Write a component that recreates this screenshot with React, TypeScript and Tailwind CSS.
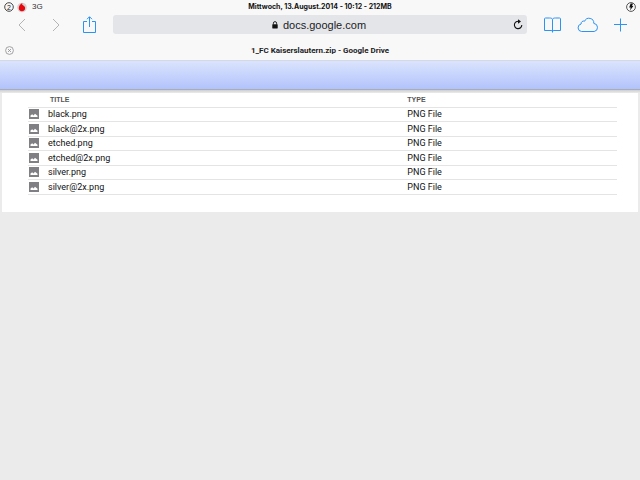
interface FileEntry {
  title: string;
  type: string;
}

const files: FileEntry[] = [
  { title: "black.png", type: "PNG File" },
  { title: "black@2x.png", type: "PNG File" },
  { title: "etched.png", type: "PNG File" },
  { title: "etched@2x.png", type: "PNG File" },
  { title: "silver.png", type: "PNG File" },
  { title: "silver@2x.png", type: "PNG File" },
];

const VodafoneIcon = () => (
  <svg width="10" height="11" viewBox="0 0 10 11">
    <circle cx="5" cy="5.5" r="4.8" fill="#d3d1d3" />
    <path d="M5.6 .9C3.5 1.8 1.8 3.8 1.8 6a3.1 3.1 0 0 0 6.3 0C8.1 4 6.2 3.6 5.1 2.5 5 1.9 5.2 1.3 5.6 .9Z" fill="#e8070c" />
  </svg>
);

const ImageIcon = () => (
  <svg width="10" height="10" viewBox="0 0 10 10" className="block">
    <rect width="10" height="10" fill="#808084" />
    <path d="M1.5 8V6.6L3.2 5.2 4.5 6.4 6 4.8 8.5 6.8V8Z" fill="#fff" />
  </svg>
);

const StatusBar = () => (
  <div className="grid h-[14px] grid-cols-[1fr_auto_1fr] items-center px-1 text-[8px] leading-[14px] text-[#111]">
    <div className="flex items-center">
      <svg width="10" height="10" viewBox="0 0 10 10">
        <circle cx="5" cy="5" r="4.3" fill="none" stroke="#333" strokeWidth=".9" />
        <text x="5" y="7.6" textAnchor="middle" fontSize="7" fill="#222">2</text>
      </svg>
      <span className="ml-[3px]">
        <VodafoneIcon />
      </span>
      <span className="ml-[5px] text-[#333]">3G</span>
    </div>
    <span className="font-['Inter',sans-serif] text-[7px] font-bold">Mittwoch, 13.August.2014 - 10:12 - 212MB</span>
    <svg width="10" height="10" viewBox="0 0 10 10" className="justify-self-end">
      <circle cx="5" cy="5" r="4.4" fill="none" stroke="#444" strokeWidth=".9" />
      <path d="M4.6 1.6H7L6.1 4H7.4L4 8.6 4.7 5.4H3.2Z" fill="#111" />
    </svg>
  </div>
);

const Toolbar = () => (
  <div className="flex h-[21px] items-center px-3">
    <button type="button" aria-label="Back" className="ml-1">
      <svg width="12" height="14" viewBox="0 0 12 14" fill="none" stroke="#b4b4b6" strokeWidth="1">
        <path d="M9 1 3 7l6 6" />
      </svg>
    </button>
    <button type="button" aria-label="Forward" className="ml-[22px]">
      <svg width="12" height="14" viewBox="0 0 12 14" fill="none" stroke="#b4b4b6" strokeWidth="1">
        <path d="m3 1 6 6-6 6" />
      </svg>
    </button>
    <button type="button" aria-label="Share" className="ml-5">
      <svg width="15" height="18" viewBox="0 0 15 18" fill="none" stroke="#2b93f5" strokeWidth="1">
        <path d="M5 5.5H1.5v11h12v-11H10M7.5 11V1M5 3.2 7.5.7 10 3.2" />
      </svg>
    </button>
    <div className="ml-4 flex h-[19px] flex-1 items-center rounded-[3px] bg-[#e4e5e9] pr-1">
      <div className="ml-3 flex flex-1 items-center justify-center">
        <svg width="6" height="8" viewBox="0 0 6 8">
          <path d="M1.4 3.5V2.2a1.6 1.6 0 0 1 3.2 0v1.3" fill="none" stroke="#111" strokeWidth=".9" />
          <rect x=".3" y="3.3" width="5.4" height="4.2" rx=".4" fill="#111" />
        </svg>
        <span className="ml-[5px] text-[11px] leading-[18px] text-[#1c1c1e]">docs.google.com</span>
      </div>
      <button type="button" aria-label="Reload">
        <svg width="10" height="11" viewBox="0 0 10 11" fill="none">
          <path d="M6.2 2.4A3.7 3.7 0 1 0 8.8 6" stroke="#111" strokeWidth="1.1" />
          <path d="M5 .2 8 2.5 5 4.7Z" fill="#111" />
        </svg>
      </button>
    </div>
    <button type="button" aria-label="Bookmarks" className="ml-4">
      <svg width="19" height="16" viewBox="0 0 19 16" fill="none" stroke="#2b93f5" strokeWidth="1">
        <path d="M9.5 15.5V2.3C9 1.2 8 1 6.5 1h-4C1.5 1 1.5 1.5 1.5 2v11.5H8q1.2 0 1.5 1 .3-1 1.5-1h6.5V2c0-.5 0-1-1-1h-4C11 1 10 1.2 9.5 2.3" />
      </svg>
    </button>
    <button type="button" aria-label="iCloud tabs" className="ml-[14px]">
      <svg width="24" height="16" viewBox="0 0 24 16" fill="none" stroke="#2b93f5" strokeWidth="1">
        <path d="M5.5 14.5a3.8 3.8 0 0 1-.4-7.5A2.6 2.6 0 0 1 8.600 4.2a4.8 4.8 0 0 1 9.200 2.2 4.100 4.100 0 0 1 .4 8.100Z" />
      </svg>
    </button>
    <button type="button" aria-label="New tab" className="ml-[14px]">
      <svg width="14" height="14" viewBox="0 0 14 14" stroke="#2b93f5" strokeWidth="1">
        <path d="M6.5.5v13M0 6.5h13" />
      </svg>
    </button>
  </div>
);

const TabBar = () => (
  <div className="grid h-[25px] grid-cols-[1fr_auto_1fr] items-center px-[5px] pt-1.5">
    <button type="button" aria-label="Close tab" className="justify-self-start">
      <svg width="9" height="9" viewBox="0 0 9 9" fill="none" stroke="#8e8e93" strokeWidth=".8">
        <circle cx="4.5" cy="4.5" r="3.9" />
        <path d="m3 3 3 3M6 3 3 6" />
      </svg>
    </button>
    <span className="font-['Roboto',sans-serif] text-[8px] leading-[14px] font-bold text-[#1c1c1e]">
      1_FC Kaiserslautern.zip - Google Drive
    </span>
  </div>
);

const FileTable = () => (
  <table className="w-full table-fixed border-collapse text-left text-[9px] leading-[12px] text-[#111]">
    <colgroup>
      <col className="w-5" />
      <col className="w-[61%]" />
      <col />
    </colgroup>
    <thead>
      <tr className="h-[14px] border-b border-[#e4e4e4] text-[7px] text-[#555]">
        <th className="p-0" />
        <th className="p-0 pl-0.5 font-bold">TITLE</th>
        <th className="p-0 font-bold">TYPE</th>
      </tr>
    </thead>
    <tbody className="font-['Roboto',sans-serif]">
      {files.map((file) => (
        <tr key={file.title} className="h-[14px] border-b border-[#e4e4e4] even:h-[15px]">
          <td className="p-0 pl-px">
            <ImageIcon />
          </td>
          <td className="p-0">{file.title}</td>
          <td className="p-0">{file.type}</td>
        </tr>
      ))}
    </tbody>
  </table>
);

const App = () => {
  return (
    <div className="min-h-screen bg-[#ebebeb] font-['Liberation_Sans',Arial,sans-serif]">
      <header className="bg-[#f8f8f8]">
        <StatusBar />
        <Toolbar />
        <TabBar />
      </header>
      <div className="h-[30px] border-t border-b border-t-[#d5d9e4] border-b-[#a9adbb] bg-linear-to-b from-[#dbe4fd] to-[#b2c3fb]" />
      <div className="h-[3px] bg-linear-to-b from-[#cfcfcf] to-[#ebebeb]" />
      <main className="mx-0.5 bg-white pr-[21px] pb-[17px] pl-[26px]">
        <FileTable />
      </main>
    </div>
  );
};

export default App;
